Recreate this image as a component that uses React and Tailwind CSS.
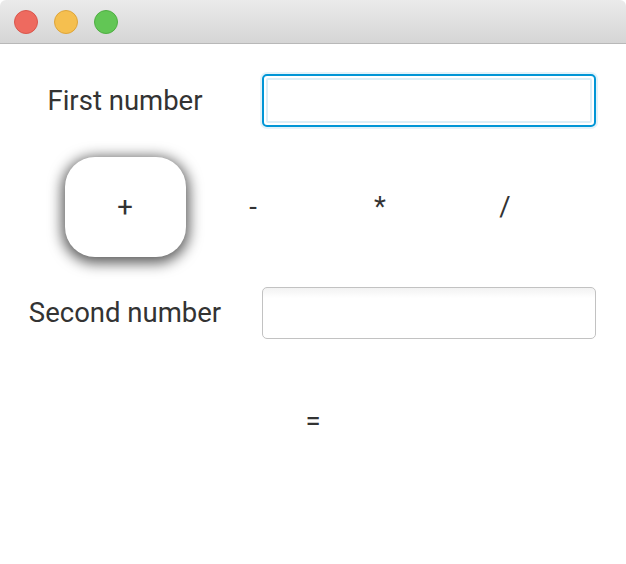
export default function App() {
  return (
    <div className="w-[626px] h-[564px] bg-white overflow-hidden" style={{ fontFamily: 'Roboto, "Liberation Sans", sans-serif' }}>
      <div className="h-[564px] rounded-t-[6px] bg-white flex flex-col overflow-hidden">
        <div className="h-[44px] shrink-0 bg-gradient-to-b from-[#ebebeb] to-[#d5d5d5] border-b border-[#b8b8b8] flex items-center gap-[16px] pl-[14px]">
          <span className="w-[24px] h-[24px] rounded-full bg-[#ee6a5f] border border-[#d9564c]" />
          <span className="w-[24px] h-[24px] rounded-full bg-[#f5bf4f] border border-[#dea53a]" />
          <span className="w-[24px] h-[24px] rounded-full bg-[#62c655] border border-[#4fae43]" />
        </div>

        <div className="flex items-center mt-[30px]">
          <div className="w-[250px] text-center text-[27.5px] leading-[32px] text-[#333333]">First number</div>
          <div className="ml-[12px] w-[334px] h-[53px] rounded-[5px] border-[2px] border-[#0096d6] p-[2px] bg-white shadow-[0_0_0_2px_#e3f3fa]">
            <div className="w-full h-full bg-white shadow-[0_0_0_2px_#dbeef7_inset] rounded-[2px]" />
          </div>
        </div>

        <div className="flex items-center mt-[30px] text-[27.5px] text-[#333333]">
          <div className="w-[250px] flex justify-center">
            <button className="w-[121px] h-[100px] rounded-[30px] bg-white shadow-[0_3px_14px_3px_rgba(0,0,0,0.65)] flex items-center justify-center text-[27.5px] text-[#333333]">+</button>
          </div>
          <div className="w-[3px]" />
          <div className="w-[0px] flex justify-center">-</div>
          <div className="w-[127px]" />
          <div className="w-[0px] flex justify-center">*</div>
          <div className="w-[125px]" />
          <div className="w-[0px] flex justify-center">/</div>
        </div>

        <div className="flex items-center mt-[30px]">
          <div className="w-[250px] text-center text-[27.5px] leading-[32px] text-[#333333]">Second number</div>
          <div className="ml-[12px] w-[334px] h-[52px] rounded-[5px] border border-[#c2c2c2] bg-gradient-to-b from-[#f2f2f2] to-white to-[20%]" />
        </div>

        <div className="mt-[66px] flex justify-center text-[27.5px] leading-[32px] text-[#333333]">=</div>
      </div>
    </div>
  );
}
